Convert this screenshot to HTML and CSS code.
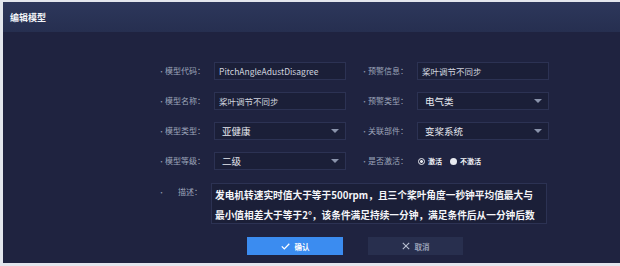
FILE: index.html
```html
<!DOCTYPE html>
<html lang="zh-CN">
<head>
    <meta charset="UTF-8">
    <meta name="viewport" content="width=device-width, initial-scale=1.0">
    <title>编辑模型</title>
    <link rel="stylesheet" href="styles.css">
</head>
<body>
    <div class="dialog">
        <div class="dialog-header">编辑模型</div>

        <div class="dialog-body">
            <div class="form">
                <div class="field">
                    <label class="field-label"><span class="dot">•</span><span class="label-text">模型代码：</span></label>
                    <div class="input">PitchAngleAdustDisagree</div>
                </div>
                <div class="field">
                    <label class="field-label"><span class="dot">•</span><span class="label-text">预警信息：</span></label>
                    <div class="input">桨叶调节不同步</div>
                </div>

                <div class="field">
                    <label class="field-label"><span class="dot">•</span><span class="label-text">模型名称：</span></label>
                    <div class="input">桨叶调节不同步</div>
                </div>
                <div class="field">
                    <label class="field-label"><span class="dot">•</span><span class="label-text">预警类型：</span></label>
                    <div class="select">电气类<span class="caret"></span></div>
                </div>

                <div class="field">
                    <label class="field-label"><span class="dot">•</span><span class="label-text">模型类型：</span></label>
                    <div class="select">亚健康<span class="caret"></span></div>
                </div>
                <div class="field">
                    <label class="field-label"><span class="dot">•</span><span class="label-text">关联部件：</span></label>
                    <div class="select">变桨系统<span class="caret"></span></div>
                </div>

                <div class="field">
                    <label class="field-label"><span class="dot">•</span><span class="label-text">模型等级：</span></label>
                    <div class="select">二级<span class="caret"></span></div>
                </div>
                <div class="field">
                    <label class="field-label"><span class="dot">•</span><span class="label-text">是否激活：</span></label>
                    <div class="radios">
                        <span class="radio radio-on"></span><span class="radio-text">激活</span>
                        <span class="radio radio-off"></span><span class="radio-text">不激活</span>
                    </div>
                </div>

                <div class="field field-wide">
                    <label class="field-label"><span class="dot">•</span><span class="label-text">描述：</span></label>
                    <div class="textarea">
                        <div class="line">发电机转速实时值大于等于500rpm，且三个桨叶角度一秒钟平均值最大与</div>
                        <div class="line">最小值相差大于等于2°，该条件满足持续一分钟，满足条件后从一分钟后数</div>
                    </div>
                </div>
            </div>

            <div class="buttons">
                <a class="btn btn-ok">
                    <svg width="9" height="7" viewBox="0 0 9 7"><path d="M0.8 3.4 L3.3 5.9 L8.3 0.8" fill="none" stroke="#fff" stroke-width="1.3"/></svg>
                    确认
                </a>
                <a class="btn btn-cancel">
                    <svg width="8" height="8" viewBox="0 0 8 8"><path d="M0.8 0.8 L7.2 7.2 M7.2 0.8 L0.8 7.2" fill="none" stroke="#b9c0d2" stroke-width="1.1"/></svg>
                    取消
                </a>
            </div>
        </div>
    </div>
</body>
</html>
```

FILE: styles.css
```css
* {
    box-sizing: border-box;
    font-family: "Noto Sans CJK SC", "Noto Sans", sans-serif;
}

body {
    margin: 0;
    background-color: #e3e6ed;
}

.dialog {
    margin: 2px 0 3px 3px;
    height: 261px;
    background-color: #1f2340;
}

.dialog-header {
    height: 30px;
    padding-left: 7px;
    display: flex;
    align-items: center;
    color: #f2f4f8;
    font-size: 9px;
    font-weight: 700;
    background: linear-gradient(#2d375b, #262f50);
}

.dialog-body {
    padding-top: 30px;
}

.form {
    margin-left: 152px;
    width: 392px;
    display: grid;
    grid-template-columns: 188px 189px;
    column-gap: 15px;
    row-gap: 12px;
}

.field {
    display: flex;
    height: 18px;
}

.field-wide {
    grid-column: 1 / 3;
    height: 41px;
    margin-top: 1px;
}

.field-label {
    display: flex;
    flex: 1;
    padding: 0 9px 0 3px;
    color: #9da5ba;
    font-size: 8px;
    line-height: 18px;
    white-space: nowrap;
}

.dot {
    font-size: 7px;
    color: #8d95ab;
}

.label-text {
    margin-left: auto;
}

.input, .select, .radios {
    position: relative;
    flex: none;
    width: 132px;
    height: 18px;
    white-space: nowrap;
}

.input, .select {
    background-color: #1b1f38;
    border: 1px solid #2c3253;
}

.input {
    padding-left: 4px;
    color: #cfd3df;
    font-size: 8.5px;
    line-height: 16px;
}

.select {
    padding-left: 7px;
    color: #e6e8ef;
    font-size: 9.5px;
    line-height: 16px;
}

.caret {
    position: absolute;
    right: 6px;
    top: 6px;
    border-left: 4px solid transparent;
    border-right: 4px solid transparent;
    border-top: 4px solid #8a93ab;
}

.radios {
    display: flex;
    align-items: center;
    padding-left: 1px;
    color: #f2f4f8;
    font-size: 7px;
    font-weight: 700;
}

.radio {
    width: 7px;
    height: 7px;
    border-radius: 50%;
    margin-right: 3px;
}

.radio-on {
    border: 1.5px solid #e8eaf0;
    background: radial-gradient(#e8eaf0 0 1.2px, #1f2340 1.6px);
}

.radio-off {
    background-color: #e8eaf0;
}

.radio-text {
    margin-right: 8px;
}

.textarea {
    flex: none;
    width: 336px;
    height: 41px;
    padding: 1px 0 0 3px;
    overflow: hidden;
    background-color: #1b1f38;
    border: 1px solid #2c3253;
    color: #f4f5f9;
    font-size: 9.7px;
    font-weight: 700;
    line-height: 20px;
}

.line {
    white-space: nowrap;
}

.buttons {
    display: flex;
    gap: 25px;
    margin: 13px 0 0 244px;
}

.btn {
    display: flex;
    align-items: center;
    justify-content: center;
    gap: 5px;
    width: 96px;
    height: 18px;
    font-size: 7.5px;
    font-weight: 700;
}

.btn-ok {
    background-color: #3b8cf0;
    color: #fff;
}

.btn-cancel {
    width: 95px;
    background-color: #282f4e;
    color: #9aa2b8;
}
```
